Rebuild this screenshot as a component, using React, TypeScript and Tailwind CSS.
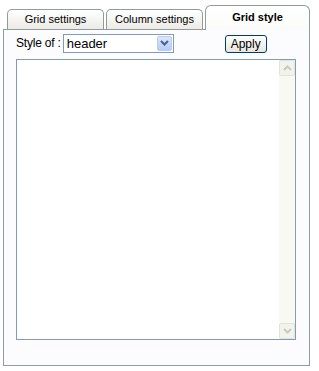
import React from "react";

function Chevron({ up, className }: { up?: boolean; className?: string }) {
  return (
    <svg width="9" height="6" viewBox="0 0 9 6" className={className}>
      <path
        d={up ? "M1 5 L4.5 1.5 L8 5" : "M1 1 L4.5 4.5 L8 1"}
        fill="none"
        stroke="currentColor"
        strokeWidth="2"
      />
    </svg>
  );
}

export default function App() {
  const font = "font-['Liberation_Sans',Arial,sans-serif]";
  return (
    <div className={`w-[319px] h-[371px] bg-white pl-[3px] pt-[5px] ${font}`}>
      {/* tab strip */}
      <div className="relative z-10 flex h-[24px] items-end gap-[2px] pl-[4px]">
        <div className="flex h-[20px] w-[97px] items-center justify-center rounded-t-[5px] border border-b-0 border-[#919b9c] bg-gradient-to-b from-white to-[#ecebe5] text-[11px] text-black">
          Grid settings
        </div>
        <div className="flex h-[20px] w-[97px] items-center justify-center rounded-t-[5px] border border-b-0 border-[#919b9c] bg-gradient-to-b from-white to-[#ecebe5] text-[11px] text-black">
          Column settings
        </div>
        <div className="-mb-px flex h-[25px] w-[105px] items-start justify-center rounded-t-[6px] border border-b-0 border-[#919b9c] bg-gradient-to-b from-white to-[#fbfbf9] pt-[3px] text-[11px] font-bold text-black">
          Grid style
        </div>
      </div>

      {/* panel */}
      <div className="flex h-[337px] w-[307px] flex-col border border-[#919b9c] bg-[#fcfcfe] pl-[12px] pt-[3px]">
        <div className="flex h-[20px] items-center">
          <span className="text-[12px] tracking-[-0.2px] text-black">Style of :</span>
          <div className="ml-[2px] flex h-[19px] w-[111px] items-center border border-[#7f9db9] bg-white pl-[3px] pr-px">
            <span className="flex-1 text-[13px] leading-none text-black">header</span>
            <div className="flex h-[15px] w-[15px] items-center justify-center rounded-[2px] border border-[#b9cbf3] bg-gradient-to-b from-[#dbe6fd] to-[#b7cbf8] text-[#4d6185]">
              <Chevron />
            </div>
          </div>
          <button className="ml-[51px] mt-[2px] flex h-[18px] w-[42px] items-center justify-center rounded-[3px] border border-[#003c74] bg-gradient-to-b from-white to-[#e6e5df] text-[12px] text-black">
            Apply
          </button>
        </div>

        {/* text area */}
        <div className="mt-[6px] flex h-[281px] w-[280px] border border-[#7f9db9] bg-white">
          <div className="flex-1" />
          <div className="flex w-[16px] flex-col bg-[#f9f9f4]">
            <div className="flex h-[16px] items-center justify-center rounded-[2px] border border-[#e3e3dc] bg-[#f3f3ee] text-[#c9c9c0]">
              <Chevron up />
            </div>
            <div className="flex-1" />
            <div className="flex h-[16px] items-center justify-center rounded-[2px] border border-[#e3e3dc] bg-[#f3f3ee] text-[#c9c9c0]">
              <Chevron />
            </div>
          </div>
        </div>
      </div>
    </div>
  );
}
